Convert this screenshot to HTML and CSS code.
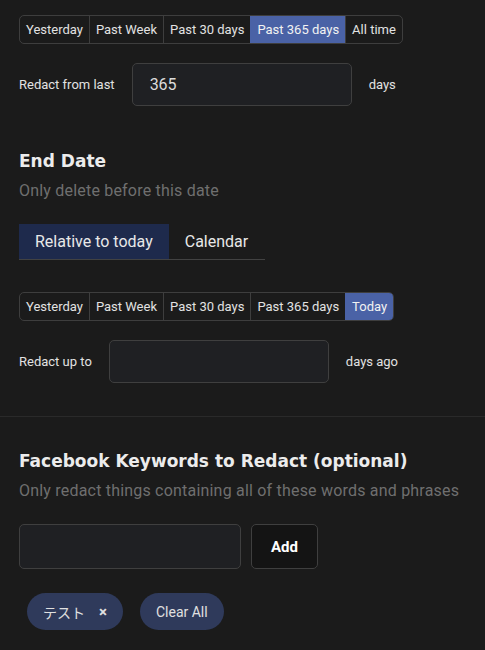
FILE: index.html
```html
<!DOCTYPE html>
<html>
<head>
<meta charset="utf-8">
<link rel="stylesheet" href="styles.css">
</head>
<body>
<div class="section top">
  <div class="btn-group">
    <button class="seg">Yesterday</button>
    <button class="seg">Past Week</button>
    <button class="seg">Past 30 days</button>
    <button class="seg active">Past 365 days</button>
    <button class="seg">All time</button>
  </div>
  <div class="field-row">
    <span class="label">Redact from last</span>
    <div class="input num">365</div>
    <span class="label">days</span>
  </div>

  <h2 class="heading end-head">End Date</h2>
  <p class="sub">Only delete before this date</p>
  <div class="tabs">
    <div class="tab active">Relative to today</div>
    <div class="tab">Calendar</div>
  </div>
  <div class="btn-group g2">
    <button class="seg">Yesterday</button>
    <button class="seg">Past Week</button>
    <button class="seg">Past 30 days</button>
    <button class="seg">Past 365 days</button>
    <button class="seg active">Today</button>
  </div>
  <div class="field-row r2">
    <span class="label">Redact up to</span>
    <div class="input"></div>
    <span class="label">days ago</span>
  </div>
</div>
<div class="divider"></div>
<div class="section kw">
  <h2 class="heading">Facebook Keywords to Redact (optional)</h2>
  <p class="sub">Only redact things containing all of these words and phrases</p>
  <div class="add-row">
    <div class="input kw-input"></div>
    <button class="add-btn">Add</button>
  </div>
  <div class="chips">
    <span class="chip">テスト <span class="x">×</span></span>
    <span class="chip">Clear All</span>
  </div>
</div>
</body>
</html>
```
FILE: styles.css
```css
* { box-sizing: border-box; }
html, body { margin: 0; padding: 0; }
body {
  background: #1b1b1b;
  color: #e2e2e2;
  font-family: Roboto, "Noto Sans CJK JP", sans-serif;
  width: 485px;
  height: 650px;
  overflow: hidden;
}
.section { padding: 0 19px; }
.top { padding-top: 15px; padding-bottom: 33px; }

.btn-group {
  display: inline-flex;
  border: 1px solid #3e3e3e;
  border-radius: 5px;
  overflow: hidden;
  height: 29px;
}
.seg {
  background: transparent;
  color: #e2e2e2;
  border: 0;
  border-left: 1px solid #3e3e3e;
  font-family: Roboto, sans-serif;
  font-size: 13px;
  padding: 0 6px;
  margin: 0;
}
.seg:first-child { border-left: 0; }
.seg.active { background: #4a62a6; color: #f2f2f2; border-left-color: #4a62a6; }

.field-row {
  display: flex;
  align-items: center;
  gap: 17px;
  margin-top: 19px;
}
.label { font-size: 13px; color: #e2e2e2; }
.input {
  width: 220px;
  height: 43px;
  border: 1px solid #3f3f3f;
  border-radius: 5px;
  background: #1f2023;
}
.num {
  font-size: 16px;
  color: #dcdcdc;
  padding-left: 17px;
  display: flex;
  align-items: center;
}

.heading {
  font-family: "DejaVu Sans", Verdana, sans-serif;
  font-weight: bold;
  font-size: 17px;
  line-height: 22px;
  margin: 0;
  color: #ececec;
}
.end-head { margin-top: 44px; }
.sub {
  margin: 8px 0 0;
  font-size: 16px;
  letter-spacing: 0.2px;
  line-height: 21px;
  color: #6f6f6f;
}
.tabs {
  display: flex;
  margin-top: 23px;
  width: 246px;
  border-bottom: 1px solid #424242;
}
.tab {
  height: 35px;
  padding: 0 16px;
  display: flex;
  align-items: center;
  font-size: 16px;
  color: #e8e8e8;
}
.tab.active { background: #1e2a4c; }
.g2 { margin-top: 32px; }
.r2 { margin-top: 19px; }

.divider { height: 1px; background: #2a2a2a; }

.kw { padding-top: 33px; }
.kw .sub { margin-top: 8px; }
.add-row {
  display: flex;
  gap: 10px;
  margin-top: 23px;
}
.kw-input { width: 222px; height: 45px; }
.add-btn {
  width: 67px;
  height: 45px;
  background: #141414;
  border: 1px solid #3f3f3f;
  border-radius: 5px;
  color: #fff;
  font-family: Roboto, sans-serif;
  font-weight: bold;
  font-size: 15px;
}
.chips {
  display: flex;
  gap: 17px;
  margin-top: 24px;
  padding-left: 8px;
}
.chip {
  height: 37px;
  border-radius: 19px;
  background: #2f3a5b;
  color: #e0e0e0;
  font-size: 14px;
  padding: 0 16px;
  display: inline-flex;
  align-items: center;
}
.chip .x { margin-left: 14px; font-weight: bold; font-size: 15px; }
```
